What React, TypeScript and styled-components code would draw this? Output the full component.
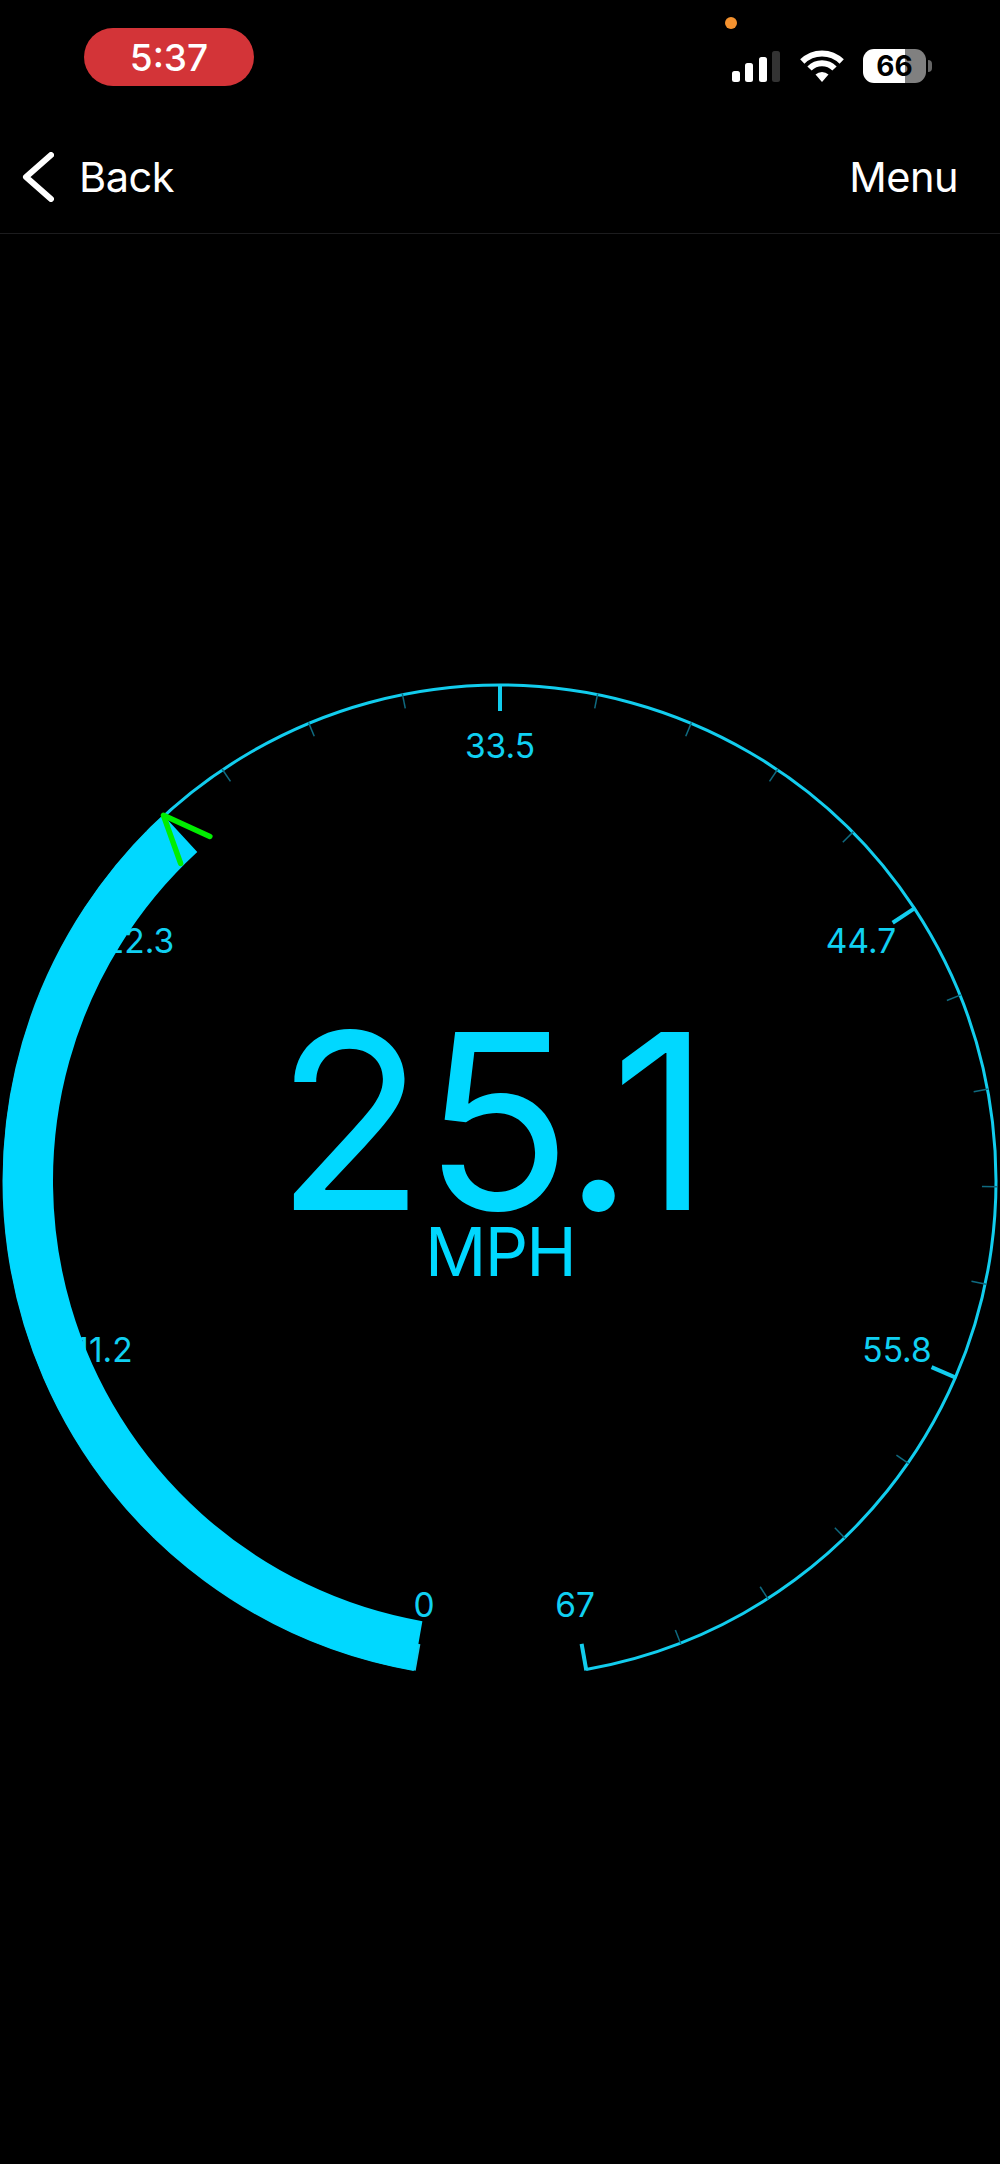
import React from "react";
import styled, { createGlobalStyle } from "styled-components";

const CYAN = "#00d8ff";

const GlobalStyle = createGlobalStyle`
  html, body {
    margin: 0;
    padding: 0;
    background: #000;
  }
  body {
    font-family: Inter, "Liberation Sans", sans-serif;
  }
`;

const Page = styled.div`
  position: relative;
  width: 1000px;
  height: 2164px;
  overflow: hidden;
  background: #000;
  color: #fff;
`;

const StatusBar = styled.div`
  position: relative;
  display: flex;
  align-items: flex-start;
  justify-content: space-between;
  height: 130px;
  padding: 28px 74px 0 84px;
  box-sizing: border-box;
`;

const TimePill = styled.div`
  display: flex;
  align-items: center;
  justify-content: center;
  width: 170px;
  height: 58px;
  border-radius: 29px;
  background: #d33438;
  font-size: 37px;
  font-weight: 450;
`;

const RecordingDot = styled.span`
  position: absolute;
  left: 725px;
  top: 17px;
  width: 12px;
  height: 12px;
  border-radius: 50%;
  background: #f5922f;
`;

const StatusIcons = styled.div`
  display: flex;
  align-items: flex-end;
  margin-top: 21px;
  height: 34px;
`;

const SignalBars = styled.div`
  display: flex;
  align-items: flex-end;
  gap: 5.5px;
  margin-right: 20px;
  margin-bottom: 1px;
`;

const SignalBar = styled.span<{ $height: number; $off?: boolean }>`
  width: 8px;
  height: ${(p) => p.$height}px;
  border-radius: 2.5px;
  background: ${(p) => (p.$off ? "#333" : "#fff")};
`;

const WifiIcon = styled.svg`
  display: block;
  margin-right: 19px;
  margin-bottom: 1px;
`;

const Battery = styled.div`
  position: relative;
  width: 63px;
  height: 34px;
  border-radius: 11px;
  background: linear-gradient(to right, #fff 0 42px, #808080 42px 100%);
  color: #000;
  font-size: 28px;
  font-weight: 700;
  line-height: 34px;
  text-align: center;

  &::after {
    content: "";
    position: absolute;
    left: 65px;
    top: 11px;
    width: 4px;
    height: 12px;
    border-radius: 0 6px 6px 0;
    background: #666;
  }
`;

const NavBar = styled.div`
  display: flex;
  align-items: center;
  justify-content: space-between;
  height: 104px;
  padding: 0 42px 10px 22px;
  box-sizing: border-box;
  border-bottom: 1px solid #1c1c1e;
`;

const NavButton = styled.div`
  display: flex;
  align-items: center;
  gap: 25px;
  font-size: 41.5px;
  font-weight: 400;
  letter-spacing: -0.5px;
`;

const GaugeWrap = styled.div`
  position: relative;
  width: 1000px;
  height: 1100px;
  margin-top: 406px;
`;

const GaugeSvg = styled.svg`
  display: block;
`;

const GaugeLabel = styled.text`
  font-family: Inter, "Liberation Sans", sans-serif;
  font-size: 33.5px;
  fill: #10d0f2;
  text-anchor: middle;
`;

const Readout = styled.div`
  position: absolute;
  left: 0;
  right: 0;
  top: 369px;
  display: flex;
  flex-direction: column;
  align-items: center;
  color: ${CYAN};
`;

const Speed = styled.div`
  font-size: 245px;
  line-height: 224px;
  font-weight: 400;
  letter-spacing: -2px;
  margin-left: -16px;
`;

const Unit = styled.div`
  margin-top: -22px;
  font-size: 68px;
  line-height: 80px;
  letter-spacing: -1.8px;
`;

const CX = 500;
const CY = 541;
const MAX = 67;
const SWEEP = 340;
const SPEED = 25.1;

// angle in degrees clockwise from the top of the dial
const polar = (deg: number, r: number) => {
  const a = (deg * Math.PI) / 180;
  return { x: CX + r * Math.sin(a), y: CY - r * Math.cos(a) };
};

const angleFor = (v: number) => -SWEEP / 2 + (v / MAX) * SWEEP;

const arc = (from: number, to: number, r: number) => {
  const s = polar(from, r);
  const e = polar(to, r);
  const large = to - from > 180 ? 1 : 0;
  return `M${s.x} ${s.y}A${r} ${r} 0 ${large} 1 ${e.x} ${e.y}`;
};

const labels = [
  { text: "0", x: 424, y: 977 },
  { text: "11.2", x: 104, y: 722 },
  { text: "22.3", x: 139, y: 313 },
  { text: "33.5", x: 500, y: 118 },
  { text: "44.7", x: 861, y: 313 },
  { text: "55.8", x: 897, y: 722 },
  { text: "67", x: 575, y: 977 }
];

function Dial() {
  const ticks = Array.from({ length: 31 }, (_, i) => i);
  const tipAngle = angleFor(SPEED);
  const tip = polar(tipAngle, 497);
  // the needle is a small V pointing out at the rim
  const radial = Math.atan2(CY - tip.y, CX - tip.x);
  const wing = (offset: number) => ({
    x: tip.x + 51 * Math.cos(radial + offset),
    y: tip.y + 51 * Math.sin(radial + offset)
  });
  const w1 = wing(-0.4);
  const w2 = wing(0.4);

  return (
    <GaugeSvg width={1000} height={1100} viewBox="0 0 1000 1100">
      <path
        d={arc(-170, 170, 496)}
        fill="none"
        stroke="#12cdee"
        strokeWidth={3}
      />
      {ticks.map((i) => {
        const major = i % 5 === 0;
        const deg = -170 + i * (SWEEP / 30);
        const a = polar(deg, 497);
        const b = polar(deg, major ? 470 : 482);
        return (
          <line
            key={i}
            x1={a.x}
            y1={a.y}
            x2={b.x}
            y2={b.y}
            stroke={major ? "#12cdee" : "#0f6a80"}
            strokeWidth={major ? 4 : 1.5}
          />
        );
      })}
      {labels.map((l) => (
        <GaugeLabel key={l.text} x={l.x} y={l.y}>
          {l.text}
        </GaugeLabel>
      ))}
      <path
        d={arc(-170, tipAngle, 472)}
        fill="none"
        stroke={CYAN}
        strokeWidth={50}
      />
      <polyline
        points={`${w1.x},${w1.y} ${tip.x},${tip.y} ${w2.x},${w2.y}`}
        fill="none"
        stroke="#00ee00"
        strokeWidth={5.5}
        strokeLinecap="round"
        strokeLinejoin="round"
      />
    </GaugeSvg>
  );
}

export default function App() {
  return (
    <Page>
      <GlobalStyle />
      <StatusBar>
        <TimePill>5:37</TimePill>
        <RecordingDot />
        <StatusIcons>
          <SignalBars>
            <SignalBar $height={11} />
            <SignalBar $height={19} />
            <SignalBar $height={25} />
            <SignalBar $height={31} $off />
          </SignalBars>
          <WifiIcon width={44} height={32} viewBox="0 0 44 32">
            <path
              d="M2.3 11.5A28 28 0 0 1 41.7 11.5"
              fill="none"
              stroke="#fff"
              strokeWidth={6}
            />
            <path
              d="M9.5 18.5A17.5 17.5 0 0 1 34.5 18.5"
              fill="none"
              stroke="#fff"
              strokeWidth={6}
            />
            <path d="M22 32L15.5 24.5A9.5 9.5 0 0 1 28.5 24.5Z" fill="#fff" />
          </WifiIcon>
          <Battery>66</Battery>
        </StatusIcons>
      </StatusBar>
      <NavBar>
        <NavButton>
          <svg width={32} height={50} viewBox="0 0 32 50">
            <path
              d="M29 3L4 25L29 47"
              fill="none"
              stroke="#fff"
              strokeWidth={6}
              strokeLinecap="round"
              strokeLinejoin="round"
            />
          </svg>
          Back
        </NavButton>
        <NavButton>Menu</NavButton>
      </NavBar>
      <GaugeWrap>
        <Dial />
        <Readout>
          <Speed>25.1</Speed>
          <Unit>MPH</Unit>
        </Readout>
      </GaugeWrap>
    </Page>
  );
}
